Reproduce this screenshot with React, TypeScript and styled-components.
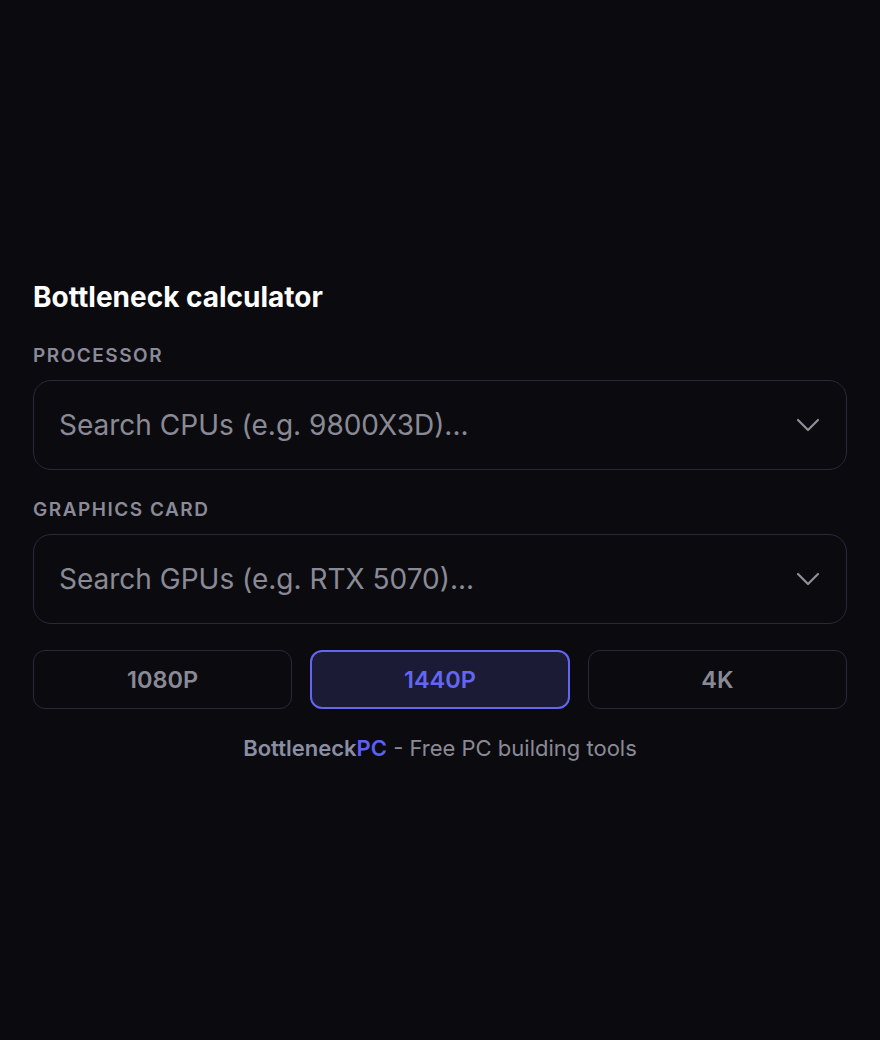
import React, { useState } from "react";
import styled, { createGlobalStyle } from "styled-components";

const GlobalStyle = createGlobalStyle`
  html, body { margin: 0; padding: 0; background: #0b0b0f; }
  body { font-family: Inter, "Noto Sans", sans-serif; color: #ffffff; }
  * { box-sizing: border-box; }
`;

const Page = styled.div`
  min-height: 100vh;
  display: flex;
  flex-direction: column;
  justify-content: center;
  padding: 2px 33px 0;
`;

const Title = styled.h1`
  margin: 0 0 31px;
  font-size: 28px;
  line-height: 1.2;
  font-weight: 700;
  color: #ffffff;
`;

const Field = styled.div<{ $last?: boolean }>`
  display: flex;
  flex-direction: column;
  gap: 12px;
  margin-bottom: ${(p) => (p.$last ? "26px" : "29px")};
`;

const Label = styled.label`
  font-size: 19px;
  line-height: 1.2;
  font-weight: 600;
  letter-spacing: 0.08em;
  text-transform: uppercase;
  color: #8a8a98;
`;

const SelectBox = styled.div`
  height: 90px;
  border: 1.5px solid #29293c;
  border-radius: 18px;
  display: flex;
  align-items: center;
  padding: 0 26px 0 25px;
  background: #0b0b0f;
`;

const Placeholder = styled.span`
  flex: 1;
  font-size: 28px;
  color: #8a8a96;
`;

const Chevron = () => (
  <svg width="24" height="14" viewBox="0 0 24 14" fill="none">
    <polyline points="2,2 12,12 22,2" stroke="#8e8e9a" strokeWidth="2.2" strokeLinecap="round" strokeLinejoin="round" />
  </svg>
);

const ResRow = styled.div`
  display: grid;
  grid-template-columns: repeat(3, 1fr);
  gap: 18px;
  margin-bottom: 26px;
`;

const ResButton = styled.button<{ $active?: boolean }>`
  height: 59px;
  border-radius: 12px;
  border: ${(p) => (p.$active ? "2px solid #6366f1" : "1.5px solid #29293c")};
  background: ${(p) => (p.$active ? "#1b1b36" : "#0b0b0f")};
  color: ${(p) => (p.$active ? "#6366f1" : "#8a8a96")};
  font-family: Inter, "Noto Sans", sans-serif;
  font-size: 23.5px;
  font-weight: 600;
  cursor: pointer;
`;

const Footer = styled.p`
  margin: 0;
  text-align: center;
  font-size: 22px;
  line-height: 1.2;
  color: #8a8a96;
`;

const Brand = styled.span`
  font-weight: 600;
  color: #8a8ea2;
`;

const BrandAccent = styled.span`
  font-weight: 600;
  color: #5b5ff6;
`;

export default function App() {
  const [res, setRes] = useState("1440P");
  return (
    <>
      <GlobalStyle />
      <Page>
        <Title>Bottleneck calculator</Title>
        <Field>
          <Label>Processor</Label>
          <SelectBox>
            <Placeholder>Search CPUs (e.g. 9800X3D)...</Placeholder>
            <Chevron />
          </SelectBox>
        </Field>
        <Field $last>
          <Label>Graphics card</Label>
          <SelectBox>
            <Placeholder>Search GPUs (e.g. RTX 5070)...</Placeholder>
            <Chevron />
          </SelectBox>
        </Field>
        <ResRow>
          {["1080P", "1440P", "4K"].map((r) => (
            <ResButton key={r} $active={res === r} onClick={() => setRes(r)}>
              {r}
            </ResButton>
          ))}
        </ResRow>
        <Footer>
          <Brand>Bottleneck</Brand>
          <BrandAccent>PC</BrandAccent> - Free PC building tools
        </Footer>
      </Page>
    </>
  );
}
